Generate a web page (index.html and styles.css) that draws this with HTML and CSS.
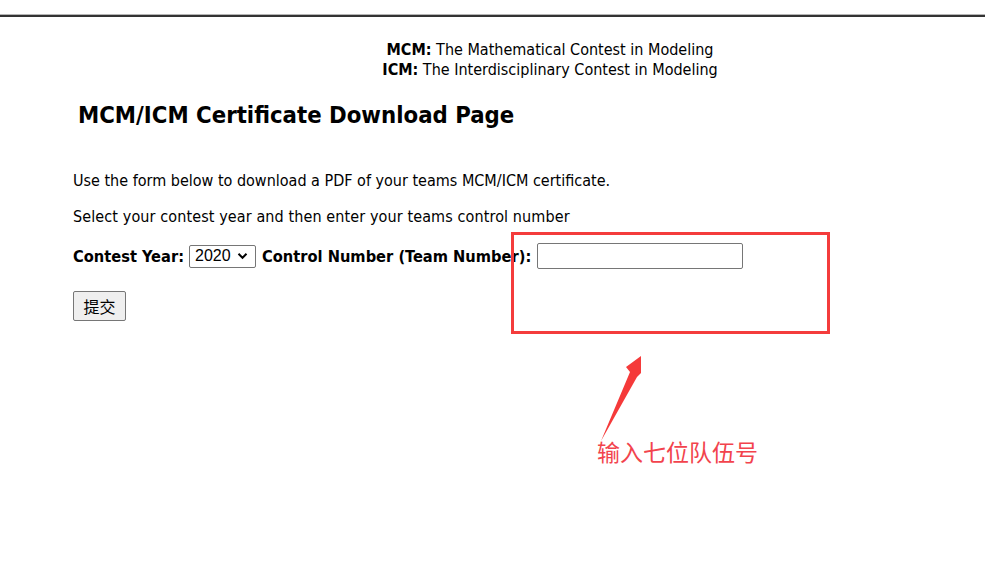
FILE: index.html
```html
<!DOCTYPE html>
<html lang="en">
<head>
<meta charset="utf-8">
<title>MCM/ICM Certificate Download Page</title>
<link rel="stylesheet" href="styles.css">
</head>
<body>
<div class="topbar"><div class="topbar-light"></div><div class="topbar-dark"></div></div>
<div class="header">
  <div class="header-line"><b>MCM:</b> The Mathematical Contest in Modeling</div>
  <div class="header-line"><b>ICM:</b> The Interdisciplinary Contest in Modeling</div>
</div>
<h1 class="title">MCM/ICM Certificate Download Page</h1>
<div class="content">
  <p class="para first">Use the form below to download a PDF of your teams MCM/ICM certificate.</p>
  <p class="para second">Select your contest year and then enter your teams control number</p>
  <form class="form">
    <div class="form-row">
      <label class="label">Contest Year:</label>
      <span class="select">2020<svg class="chev" width="11" height="8" viewBox="0 0 11 8"><path d="M1.5 1.8 L5.5 5.8 L9.5 1.8" fill="none" stroke="#000" stroke-width="2"/></svg></span>
      <label class="label">Control Number (Team Number):</label>
      <span class="input"></span>
    </div>
    <div class="button-row"><span class="button">提交</span></div>
  </form>
</div>
<div class="annot-box"></div>
<svg class="annot-arrow" width="985" height="577" viewBox="0 0 985 577">
  <polygon points="601,441 630,372 626,367 641,356 641,373 637,377" fill="#f53a3a"/>
</svg>
<div class="annot-text">输入七位队伍号</div>
</body>
</html>
```
FILE: styles.css
```css
html, body {
  margin: 0;
  padding: 0;
  background: #ffffff;
  color: #000000;
}
body {
  position: relative;
  width: 985px;
  height: 577px;
  overflow: hidden;
  font-family: "DejaVu Sans Condensed", "Liberation Sans", sans-serif;
}
.topbar {
  padding-top: 14px;
}
.topbar-light {
  height: 1px;
  background: #b5b5b5;
}
.topbar-dark {
  height: 2px;
  background: #333333;
}
.header {
  margin-top: 23px;
  padding-left: 115px;
  text-align: center;
  font-size: 16px;
  line-height: 19.5px;
  color: #000;
}
.header-line b {
  font-weight: bold;
}
.title {
  margin: 21px 0 0 78px;
  font-size: 23.7px;
  line-height: 30px;
  font-weight: bold;
}
.content {
  padding-left: 73px;
}
.para {
  margin: 0;
  font-size: 16px;
  line-height: 20px;
}
.para.first {
  margin-top: 41px;
}
.para.second {
  margin-top: 16px;
  letter-spacing: 0.11px;
}
.form {
  margin: 0;
}
.form-row {
  margin-top: 16px;
  display: flex;
  align-items: center;
  gap: 5px;
  height: 26px;
}
.label {
  font-family: "DejaVu Sans Condensed", "Liberation Sans", sans-serif;
  font-weight: bold;
  font-size: 16.3px;
}
.select {
  display: inline-flex;
  align-items: center;
  box-sizing: border-box;
  height: 23px;
  width: 67px;
  margin-right: 1px;
  padding: 0 0 0 5px;
  gap: 6px;
  border: 1px solid #767676;
  border-radius: 2px;
  font-family: "Liberation Sans", sans-serif;
  font-size: 16px;
}
.chev {
  display: block;
}
.input {
  display: inline-block;
  box-sizing: border-box;
  width: 206px;
  height: 26px;
  border: 1px solid #767676;
  border-radius: 2px;
  margin-left: 1px;
}
.button-row {
  margin-top: 22px;
}
.button {
  display: inline-flex;
  align-items: center;
  justify-content: center;
  box-sizing: border-box;
  width: 53px;
  height: 30px;
  background: #efefef;
  border: 1px solid #767676;
  border-radius: 2px;
  font-family: "Noto Sans CJK SC", sans-serif;
  font-size: 16px;
}
.annot-box {
  position: absolute;
  left: 511px;
  top: 232px;
  width: 313px;
  height: 96px;
  border: 3px solid #f43c3c;
}
.annot-arrow {
  position: absolute;
  left: 0;
  top: 0;
}
.annot-text {
  position: absolute;
  left: 597px;
  top: 435px;
  font-family: "Noto Sans CJK SC", sans-serif;
  font-size: 23px;
  line-height: 32px;
  color: #f2434d;
}
```
